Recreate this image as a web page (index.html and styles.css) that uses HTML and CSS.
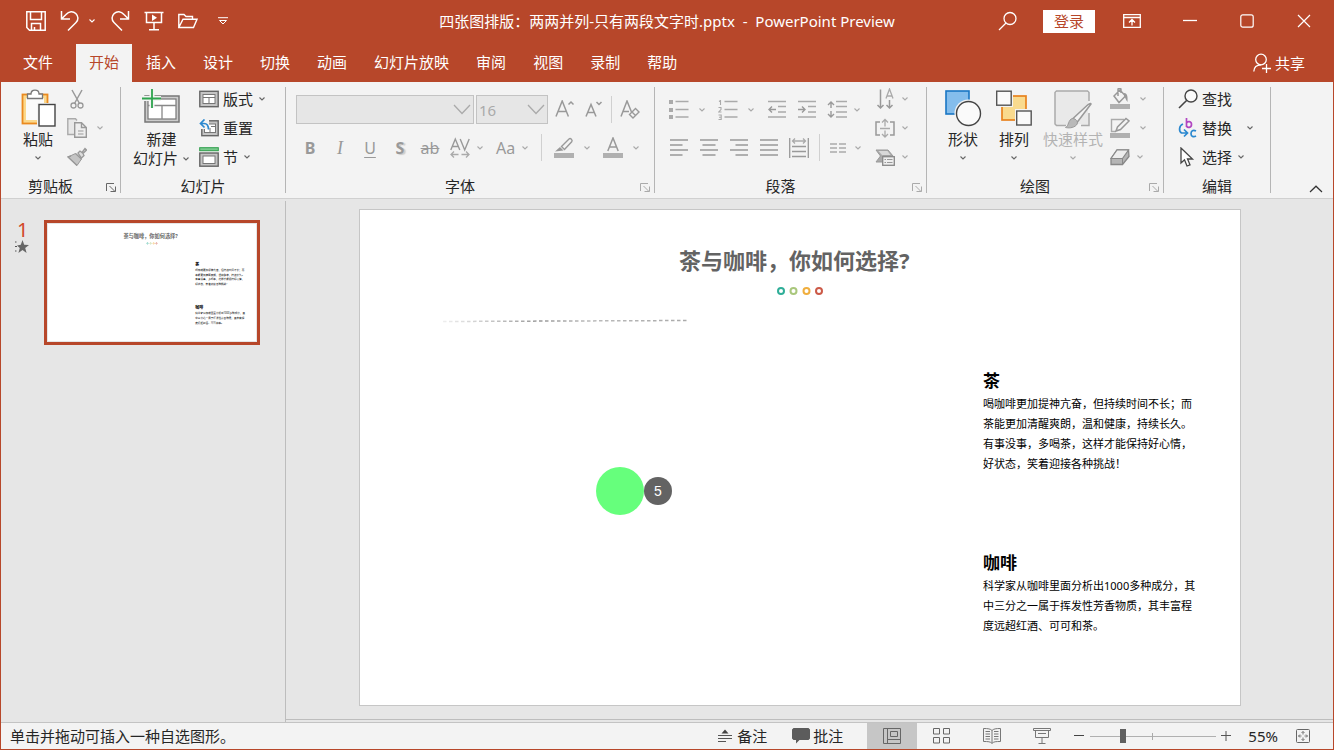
FILE: index.html
```html
<!DOCTYPE html>
<html lang="zh-CN">
<head>
<meta charset="utf-8">
<meta name="viewport" content="width=device-width, initial-scale=1">
<title>PowerPoint Preview</title>
<link rel="stylesheet" href="styles.css">
</head>
<body>
<svg class="defs" width="0" height="0" aria-hidden="true">
  <symbol id="chev" viewBox="0 0 8 6"><path d="M1.500 1.500 4 4 6.500 1.500" fill="none" stroke="currentColor" stroke-width="1.1"/></symbol>
  <symbol id="launch" viewBox="0 0 10 10"><path d="M.5 9V1.500H8M3.500 4 9 9.500M9.500 4.500V9.500H4.500" fill="none" stroke="currentColor"/></symbol>
</svg>
<div class="app">
  <header class="titlebar">
    <div class="quick">
      <button class="btn" aria-label="保存"><svg width="20" height="20" viewBox="0 0 20 20"><path d="M.8.8H19.200V19.200H3.500L.8 16.500ZM4.500 1V8.500H15.500V1M5.500 19V12.500H14.500V19M8.500 19V16" fill="none" stroke="#fff" stroke-width="1.500"/></svg></button>
      <button class="btn undo" aria-label="撤消"><svg width="20" height="22" viewBox="0 0 20 22"><path d="M1.500 1V9H10M2 8.500 6 4.500C9 1 13 .8 15.800 3.500S18.600 10 16 12.500L8 20.500" fill="none" stroke="#fff" stroke-width="1.500"/></svg><svg width="8" height="6"><use href="#chev"/></svg></button>
      <button class="btn" aria-label="恢复"><svg width="20" height="22" viewBox="0 0 20 22"><path d="M18.500 1V9H10M18 8.500 14 4.500C11 1 7 .8 4.200 3.500S1.400 10 4 12.500L12 20.500" fill="none" stroke="#fff" stroke-width="1.500"/></svg></button>
      <button class="btn" aria-label="从头放映"><svg width="20" height="20" viewBox="0 0 20 20"><path d="M.5 1.500H19.500M2.500 2V11.500H17.500V2M10 11.500V18.500M5 18.700H15" fill="none" stroke="#fff" stroke-width="1.500"/><path d="M8 3.500V10L13 6.700Z" fill="#fff"/></svg></button>
      <button class="btn" aria-label="打开"><svg width="20" height="16" viewBox="0 0 20 16"><path d="M.8 14.500V1.500H6L8 3.500H14.500V6M.8 14.500 5 6.200H19L15.500 14.500Z" fill="none" stroke="#fff" stroke-width="1.400"/></svg></button>
      <button class="btn last" aria-label="自定义快速访问工具栏"><svg width="10" height="8" viewBox="0 0 10 8"><path d="M0 .7H10M1.500 3.500H8.500L5 7Z" fill="none" stroke="#fff"/></svg></button>
    </div>
    <h1 class="doc-title">四张图排版：两两并列-只有两段文字时.pptx  -  PowerPoint Preview</h1>
    <div class="window">
      <button class="btn" aria-label="搜索"><svg width="20" height="20" viewBox="0 0 20 20"><circle cx="12" cy="7.500" r="6" fill="none" stroke="#fff" stroke-width="1.300"/><path d="M8 12 1 19" stroke="#fff" stroke-width="1.300"/></svg></button>
      <button class="login">登录</button>
      <button class="btn" aria-label="功能区显示选项"><svg width="18" height="14" viewBox="0 0 18 14"><path d="M.7.7H17.300V13.300H.7ZM.7 3.500H17.300M9 11.500V5.500M6 8.500 9 5.500 12 8.500" fill="none" stroke="#fff" stroke-width="1.300"/></svg></button>
      <span class="frame">
        <button class="btn" aria-label="最小化"><svg width="14" height="14" viewBox="0 0 14 14"><path d="M0 6.500H14" stroke="#fff" stroke-width="1.300"/></svg></button>
        <button class="btn" aria-label="最大化"><svg width="14" height="14" viewBox="0 0 14 14"><rect x=".8" y=".8" width="12.400" height="12.400" rx="2" fill="none" stroke="#fff" stroke-width="1.200"/></svg></button>
        <button class="btn" aria-label="关闭"><svg width="14" height="14" viewBox="0 0 14 14"><path d="M1 1 13 13M13 1 1 13" stroke="#fff" stroke-width="1.200"/></svg></button>
      </span>
    </div>
  </header>

  <nav class="tabs">
    <button class="tab file">文件</button>
    <button class="tab active">开始</button>
    <button class="tab">插入</button>
    <button class="tab">设计</button>
    <button class="tab">切换</button>
    <button class="tab">动画</button>
    <button class="tab">幻灯片放映</button>
    <button class="tab">审阅</button>
    <button class="tab">视图</button>
    <button class="tab">录制</button>
    <button class="tab">帮助</button>
    <button class="share"><svg width="18" height="20" viewBox="0 0 18 20"><circle cx="8" cy="6.500" r="5.300" fill="none" stroke="#fff" stroke-width="1.300"/><path d="M.8 18.500C1 14 4 11.800 8 11.800M9 15.500H18M13.500 11V20" fill="none" stroke="#fff" stroke-width="1.300"/></svg>共享</button>
  </nav>

  <section class="ribbon">
    <div class="group g-clip">
      <div class="tools">
        <button class="big"><svg width="38" height="40" viewBox="0 0 38 40"><rect x="3.500" y="5.500" width="25" height="29" fill="#fbd88b" stroke="#ea8a1f" stroke-width="1.800"/><rect x="7" y="9" width="18" height="22" fill="#fafafa"/><path d="M8.500 9.500V5H12C12 2.500 13.500 1.200 16 1.200S20 2.500 20 5H23.500V9.500Z" fill="#fff" stroke="#777" stroke-width="1.300"/><rect x="18" y="14" width="18" height="24" fill="#f3f3f3"/><rect x="20" y="15.500" width="16" height="21.500" fill="#fff" stroke="#444" stroke-width="1.400"/></svg><span>粘贴</span><svg width="8" height="6"><use href="#chev"/></svg></button>
        <div class="stack off">
          <button class="btn" disabled aria-label="剪切"><svg width="20" height="20" viewBox="0 0 20 20"><path d="M5 1 12.500 14.500M15 1 7.500 14.500" fill="none" stroke="#999" stroke-width="1.500"/><circle cx="6.500" cy="16.500" r="2.500" fill="none" stroke="#999" stroke-width="1.300"/><circle cx="13.500" cy="16.500" r="2.500" fill="none" stroke="#999" stroke-width="1.300"/></svg></button>
          <button class="btn split" disabled aria-label="复制"><svg width="20" height="20" viewBox="0 0 20 20"><path d="M7 16.500H.8V.8H8.500L10 2.500" fill="#e8e8e8" stroke="#aaa" stroke-width="1.400"/><path d="M7.700 4.700H14.500L19.300 9.500V19.300H7.700ZM14.500 4.700V9.500H19.300" fill="#eee" stroke="#999" stroke-width="1.400"/><path d="M11 13H16.500M11 16H16.500" stroke="#999"/></svg><svg width="8" height="6"><use href="#chev"/></svg></button>
          <button class="btn" disabled aria-label="格式刷"><svg width="20" height="20" viewBox="0 0 20 20"><path d="M11 6 13 4 15 5.500 18 1.500 19.500 3 16 6.500 17 8.500 14.500 11Z" fill="#ddd" stroke="#999" stroke-width="1.300"/><path d="M8.500 6.500 14.500 12 10 18.500 1 10Z" fill="#c4c4c4" stroke="#999"/><path d="M8.500 6.500 14.500 12M4 9 1 10 10 18.500" fill="none" stroke="#999" stroke-width="1.400"/></svg></button>
        </div>
      </div>
      <div class="foot"><span>剪贴板</span><button class="launcher" aria-label="剪贴板设置"><svg width="10" height="10"><use href="#launch"/></svg></button></div>
    </div>

    <div class="group g-slides">
      <div class="tools">
        <button class="big"><svg width="38" height="40" viewBox="0 0 38 40"><rect x="3" y="7" width="34" height="26" fill="#ccc" stroke="#777" stroke-width="1.500"/><rect x="6" y="10" width="28" height="20" fill="#fff" stroke="#777" stroke-width="1.200"/><path d="M6 16.500H34M20 16.500V30" stroke="#888" stroke-width="1.300"/><path d="M10 0V19M0 9.500H19" stroke="#f3f3f3" stroke-width="5"/><path d="M10 0V19M0 9.500H19" stroke="#2ea44e" stroke-width="1.800"/></svg><span>新建<br>幻灯片 <svg width="8" height="6"><use href="#chev"/></svg></span></button>
        <div class="stack">
          <button class="btn item"><svg width="20" height="18" viewBox="0 0 20 18"><rect x=".8" y="1.300" width="18.400" height="15.400" fill="#c4c4c4" stroke="#666" stroke-width="1.400"/><rect x="4" y="4.500" width="12" height="9" fill="#fff" stroke="#777"/><path d="M4 7.500H16M10 7.500V13.500" stroke="#777"/></svg>版式<svg class="c" width="8" height="6"><use href="#chev"/></svg></button>
          <button class="btn item"><svg width="20" height="18" viewBox="0 0 20 18"><rect x="2.800" y="1.800" width="16.400" height="14.900" fill="#c4c4c4" stroke="#666" stroke-width="1.400"/><rect x="5.500" y="5" width="11" height="8.500" fill="#fff" stroke="#777"/><path d="M12 7.500H16M11 9V13" stroke="#777"/><path d="M0 0H10V10H0Z" fill="#f3f3f3"/><path d="M5.500.5 1.500 4.500 5.500 8.500M1.500 4.500H5C8.500 4.500 9.500 7 9.500 10.500" fill="none" stroke="#2b88cf" stroke-width="1.700"/></svg>重置</button>
          <button class="btn item"><svg width="20" height="20" viewBox="0 0 20 20"><rect x=".7" y=".7" width="18.600" height="3" fill="#79c98c" stroke="#2f9e4b"/><rect x=".8" y="6" width="18.400" height="13.200" fill="#c4c4c4" stroke="#666" stroke-width="1.400"/><rect x="4" y="9" width="12" height="7.500" fill="#fff" stroke="#777"/></svg>节<svg class="c" width="8" height="6"><use href="#chev"/></svg></button>
        </div>
      </div>
      <div class="foot"><span>幻灯片</span></div>
    </div>

    <div class="group g-font">
      <div class="tools rows off">
        <div class="row combos">
          <span class="combo wide"><select disabled aria-label="字体"><option></option></select><svg width="18" height="11" viewBox="0 0 18 11"><path d="M1 1 9 9.500 17 1" fill="none" stroke="#aaa" stroke-width="1.300"/></svg></span>
          <span class="combo"><select disabled aria-label="字号"><option>16</option></select><svg width="18" height="11" viewBox="0 0 18 11"><path d="M1 1 9 9.500 17 1" fill="none" stroke="#aaa" stroke-width="1.300"/></svg></span>
          <span class="sizing">
            <button class="btn" disabled aria-label="增大字号"><svg width="20" height="20" viewBox="0 0 20 20"><path d="M1 16.500 7.200 1 13.400 16.500M3 11.500H11.500M13.500 4.500 16 2 18.500 4.500" fill="none" stroke="#999" stroke-width="1.500"/></svg></button>
            <button class="btn" disabled aria-label="减小字号"><svg width="20" height="20" viewBox="0 0 20 20"><path d="M3 16.500 8 4.500 13 16.500M4.500 12.500H11.500M13.500 2 16 4.500 18.500 2" fill="none" stroke="#999" stroke-width="1.500"/></svg></button>
            <i class="sep"></i>
            <button class="btn" disabled aria-label="清除格式"><svg width="20" height="20" viewBox="0 0 20 20"><path d="M1 16.500 7 1 11.500 12M3 11.500H9" fill="none" stroke="#999" stroke-width="1.500"/><path d="M9.500 14.500 15.500 8.500 19 12 13 18ZM12 12 15.500 15.500" fill="#f3f3f3" stroke="#999" stroke-width="1.400"/></svg></button>
          </span>
        </div>
        <div class="row styles">
          <button class="btn glyph" disabled><b>B</b></button>
          <button class="btn glyph serif" disabled><i>I</i></button>
          <button class="btn glyph under" disabled>U</button>
          <button class="btn glyph shadow" disabled><b>S</b></button>
          <button class="btn glyph" disabled><s>ab</s></button>
          <span class="more">
            <button class="btn dd" disabled aria-label="字符间距"><svg width="20" height="22" viewBox="0 0 20 22"><path d="M.8 13 5.300 2 9.800 13M2.500 9.500H8M10.200 2 14.700 13 19.200 2" fill="none" stroke="#999" stroke-width="1.400"/><path d="M4 14.500 1 17.500 4 20.500M1 17.500H8.500M16 14.500 19 17.500 16 20.500M19 17.500H11.500" fill="none" stroke="#aaa" stroke-width="1.300"/></svg><svg width="8" height="6"><use href="#chev"/></svg></button>
            <button class="btn dd glyph" disabled><span>Aa</span><svg width="8" height="6"><use href="#chev"/></svg></button>
            <i class="sep"></i>
            <button class="btn split" disabled aria-label="文本突出显示颜色"><svg width="20" height="22" viewBox="0 0 20 22"><path d="M7.500 9.500 15 2C16.500 .8 19 3 17.700 4.800L10.500 12.500Z" fill="none" stroke="#999" stroke-width="1.400"/><path d="M6 10 9.500 13.500 1 14.500Z" fill="#999"/><rect y="16" width="20" height="5" fill="#b0b0b0"/></svg><svg width="8" height="6"><use href="#chev"/></svg></button>
            <button class="btn split" disabled aria-label="字体颜色"><svg width="20" height="22" viewBox="0 0 20 22"><path d="M4.800 14 10 1 15.200 14M6.500 10H13.500" fill="none" stroke="#999" stroke-width="1.500"/><rect y="16" width="20" height="5" fill="#b0b0b0"/></svg><svg width="8" height="6"><use href="#chev"/></svg></button>
          </span>
        </div>
      </div>
      <div class="foot"><span>字体</span><button class="launcher dim" disabled aria-label="字体设置"><svg width="10" height="10"><use href="#launch"/></svg></button></div>
    </div>

    <div class="group g-para">
      <div class="tools">
        <div class="rows off">
          <div class="row lists">
            <button class="btn split" disabled aria-label="项目符号"><svg width="20" height="20" viewBox="0 0 20 20"><path d="M0 0H4V4H0ZM0 8H4V12H0ZM0 15H4V19H0Z" fill="#aaa"/><path d="M6.500 1.500H19.500M6.500 9.500H19.500M6.500 17H19.500" stroke="#aaa" stroke-width="1.500"/></svg><svg width="8" height="6"><use href="#chev"/></svg></button>
            <button class="btn split" disabled aria-label="编号"><svg width="20" height="20" viewBox="0 0 20 20"><path d="M1 1.500 2.500.5V5M.5 7.500H3V9.500L.8 12H3.500M.5 15H3.200V19.500H.5M1 17.200H3" fill="none" stroke="#aaa" stroke-width="1.100"/><path d="M6.500 1.500H19.500M6.500 9.500H19.500M6.500 17H19.500" stroke="#aaa" stroke-width="1.500"/></svg><svg width="8" height="6"><use href="#chev"/></svg></button>
            <span class="row">
              <button class="btn" disabled aria-label="减少列表级别"><svg width="20" height="20" viewBox="0 0 20 20"><path d="M1 1.500H19M11 6.500H19M11 12H19M1 17H19" stroke="#aaa" stroke-width="1.500"/><path d="M5 6.500 2 9.500 5 12.500M2 9.500H9" fill="none" stroke="#999" stroke-width="1.400"/></svg></button>
              <button class="btn" disabled aria-label="提高列表级别"><svg width="20" height="20" viewBox="0 0 20 20"><path d="M1 1.500H19M11 6.500H19M11 12H19M1 17H19" stroke="#aaa" stroke-width="1.500"/><path d="M5 6.500 8 9.500 5 12.500M8 9.500H1" fill="none" stroke="#999" stroke-width="1.400"/></svg></button>
              <button class="btn dd" disabled aria-label="行距"><svg width="20" height="20" viewBox="0 0 20 20"><path d="M9 1.500H20M9 6.500H20M9 12H20M9 17H20" stroke="#aaa" stroke-width="1.500"/><path d="M1 5 4 2 7 5M4 2V8M1 14 4 17 7 14M4 17V11" fill="none" stroke="#999" stroke-width="1.400"/></svg><svg width="8" height="6"><use href="#chev"/></svg></button>
            </span>
          </div>
          <div class="row">
            <button class="btn" disabled aria-label="左对齐"><svg width="20" height="20" viewBox="0 0 20 20"><path d="M1 2H19M1 7H13.500M1 12H19M1 17H13.500" stroke="#999" stroke-width="1.500"/></svg></button>
            <button class="btn" disabled aria-label="居中"><svg width="20" height="20" viewBox="0 0 20 20"><path d="M1 2H19M3.500 7H16.500M1 12H19M3.500 17H16.500" stroke="#999" stroke-width="1.500"/></svg></button>
            <button class="btn" disabled aria-label="右对齐"><svg width="20" height="20" viewBox="0 0 20 20"><path d="M1 2H19M6.500 7H19M1 12H19M6.500 17H19" stroke="#999" stroke-width="1.500"/></svg></button>
            <button class="btn" disabled aria-label="两端对齐"><svg width="20" height="20" viewBox="0 0 20 20"><path d="M1 2H19M1 7H19M1 12H19M1 17H19" stroke="#999" stroke-width="1.500"/></svg></button>
            <button class="btn" disabled aria-label="分散对齐"><svg width="20" height="22" viewBox="0 0 20 22"><path d="M.7 1V21M19.300 1V21" stroke="#999" stroke-width="1.300"/><path d="M3 9.500H17M3 14.500H17M3 19.500H17" stroke="#999" stroke-width="1.500"/><path d="M6 1.500 3.500 4 6 6.500M14 1.500 16.500 4 14 6.500M3.500 4H16.500" fill="none" stroke="#aaa" stroke-width="1.300"/></svg></button>
            <i class="sep"></i>
            <button class="btn dd" disabled aria-label="分栏"><svg width="18" height="20" viewBox="0 0 18 20"><path d="M0 6H7M0 10H7M0 14H7M9 6H16M9 10H16M9 14H16" stroke="#aaa" stroke-width="1.400"/></svg><svg width="8" height="6"><use href="#chev"/></svg></button>
          </div>
        </div>
        <div class="stack off">
          <button class="btn dd" disabled aria-label="文字方向"><svg width="20" height="22" viewBox="0 0 20 22"><path d="M5.500 1.500V20M2.500 17 5.500 20 8.500 17M14.500 12V20M11.500 17 14.500 20 17.500 17" fill="none" stroke="#999" stroke-width="1.500"/><path d="M11 10.500 14.500 1 18 10.500M12 8H17" fill="none" stroke="#aaa" stroke-width="1.300"/></svg><svg width="8" height="6"><use href="#chev"/></svg></button>
          <button class="btn dd" disabled aria-label="对齐文本"><svg width="20" height="20" viewBox="0 0 20 20"><path d="M5 4H1V17H5M15 4H19V17H15" fill="none" stroke="#999" stroke-width="1.500"/><path d="M5 10.500H15M10 1.500V8.500M7 4.500 10 1.500 13 4.500M10 12.500V19M7 16 10 19 13 16" fill="none" stroke="#aaa" stroke-width="1.300"/></svg><svg width="8" height="6"><use href="#chev"/></svg></button>
          <button class="btn dd" disabled aria-label="转换为 SmartArt"><svg width="20" height="18" viewBox="0 0 20 18"><path d="M1 2H13L18 8H8V14H1L5.500 8Z" fill="#aaa" stroke="#999"/><path d="M3.500 3H12.500L15.500 7H7Z" fill="#d8d8d8"/><rect x="7.700" y="8.700" width="11.600" height="8.600" fill="#eee" stroke="#888" stroke-width="1.300"/><path d="M9.500 11.500H11M12 11.500H17.500M9.500 14.500H11M12 14.500H17.500" stroke="#999"/></svg><svg width="8" height="6"><use href="#chev"/></svg></button>
        </div>
      </div>
      <div class="foot"><span>段落</span><button class="launcher dim" disabled aria-label="段落设置"><svg width="10" height="10"><use href="#launch"/></svg></button></div>
    </div>

    <div class="group g-draw">
      <div class="tools">
        <button class="big"><svg width="38" height="40" viewBox="0 0 38 40"><rect x="2" y="2" width="23" height="23" fill="#84bdec" stroke="#1a76c4" stroke-width="1.600"/><circle cx="24.500" cy="24.500" r="14" fill="#f3f3f3"/><circle cx="24.500" cy="24.500" r="12" fill="#fafafa" stroke="#444" stroke-width="1.400"/></svg><span>形状</span><svg width="8" height="6"><use href="#chev"/></svg></button>
        <button class="big"><svg width="38" height="40" viewBox="0 0 38 40"><rect x="7" y="7" width="24" height="24" fill="#f9da8e" stroke="#e8821e" stroke-width="1.700"/><path d="M0 0H18V18H0ZM20 20H38V38H20Z" fill="#f3f3f3"/><rect x="1.700" y="2.200" width="14.500" height="14" fill="#fafafa" stroke="#555" stroke-width="1.400"/><rect x="21.700" y="22" width="14.500" height="14" fill="#fafafa" stroke="#555" stroke-width="1.400"/></svg><span>排列</span><svg width="8" height="6"><use href="#chev"/></svg></button>
        <button class="big faded" disabled><svg width="38" height="40" viewBox="0 0 38 40"><path d="M12 36.500H2.500L1 35V3.500L2.500 2H33.500L35 3.500V12M35 24V36.500H27" fill="#e9e9e9" stroke="#aaa" stroke-width="1.500"/><path d="M2 35V3H34V35Z" fill="#e9e9e9"/><path d="M37 15 23 33.500 19 29.500 33 16.500C35 14.700 37 14 37 15Z" fill="#f3f3f3" stroke="#999" stroke-width="1.500"/><path d="M18.500 29.500C22 29.500 25 33 22.500 36 19 39.500 14 39 11.500 38.500 15 37 14 30.500 18.500 29.500Z" fill="#b9b9b9" stroke="#999"/></svg><span>快速样式</span><svg width="8" height="6"><use href="#chev"/></svg></button>
        <div class="stack off">
          <button class="btn split" disabled aria-label="形状填充"><svg width="20" height="22" viewBox="0 0 20 22"><path d="M4 8 10 2 15.500 8 9 14.500ZM8 8V1.500C8 0 11 0 11 1.500V5" fill="none" stroke="#999" stroke-width="1.500"/><path d="M14 5C17 5 18 8 17.500 14 15.500 12 15.500 9 14 8Z" fill="#999"/><rect y="16" width="20" height="5" fill="#b0b0b0"/></svg><svg width="8" height="6"><use href="#chev"/></svg></button>
          <button class="btn split" disabled aria-label="形状轮廓"><svg width="20" height="22" viewBox="0 0 20 22"><path d="M14 2.500H1.500V14.500H6" fill="none" stroke="#aaa" stroke-width="1.400"/><path d="M6 14 7.500 10 16 1.500 19 4 10.500 12.500Z" fill="none" stroke="#999" stroke-width="1.500"/><rect y="16" width="20" height="5" fill="#b0b0b0"/></svg><svg width="8" height="6"><use href="#chev"/></svg></button>
          <button class="btn dd" disabled aria-label="形状效果"><svg width="20" height="18" viewBox="0 0 20 18"><path d="M7 2H18.500L19 8.500 12.500 16.500H1V10.500Z" fill="#b5b5b5" stroke="#888" stroke-width="1.300"/><path d="M7 2H18.500L12.500 10.500H1Z" fill="#ededed" stroke="#888" stroke-width="1.200"/><path d="M12.500 10.500V16.500" stroke="#888"/></svg><svg width="8" height="6"><use href="#chev"/></svg></button>
        </div>
      </div>
      <div class="foot"><span>绘图</span><button class="launcher dim" disabled aria-label="绘图设置"><svg width="10" height="10"><use href="#launch"/></svg></button></div>
    </div>

    <div class="group g-edit">
      <div class="tools">
        <div class="stack">
          <button class="btn item"><svg width="20" height="20" viewBox="0 0 20 20"><circle cx="13" cy="7" r="6" fill="#fafafa" stroke="#444" stroke-width="1.400"/><path d="M8.800 11.200 1 19" stroke="#444" stroke-width="1.600"/></svg>查找</button>
          <button class="btn item wide"><svg width="20" height="22" viewBox="0 0 20 22"><path d="M8.500 1V10M8.500 6C9.500 4 13.500 4 13.500 7.500S9.500 11 8.500 9" fill="none" stroke="#b146c2" stroke-width="1.700"/><path d="M18 14C15 12.500 13 14 13 16.700S15.500 20.500 18 19M5 7C1 8.500.5 14 3.500 16H9M6 12.500 9.500 16 6 19.500" fill="none" stroke="#2b88cf" stroke-width="1.700"/></svg>替换<svg class="c" width="8" height="6"><use href="#chev"/></svg></button>
          <button class="btn item"><svg width="20" height="20" viewBox="0 0 20 20"><path d="M3 1V16L6.500 12.800 9 19 12 17.800 9.500 12H14.500Z" fill="#fff" stroke="#444" stroke-width="1.300"/></svg>选择<svg class="c" width="8" height="6"><use href="#chev"/></svg></button>
        </div>
      </div>
      <div class="foot"><span>编辑</span></div>
    </div>
    <button class="btn collapse" aria-label="折叠功能区"><svg width="14" height="8" viewBox="0 0 14 8"><path d="M1 7 7 1.200 13 7" fill="none" stroke="#333" stroke-width="1.200"/></svg></button>
  </section>

  <main class="work">
    <aside class="outline">
      <div class="index"><span>1</span><svg width="14" height="14" viewBox="0 0 14 14"><path d="M7.500 0 9.200 4.800 14 5 10.200 8 11.600 13 7.500 10.100 3.400 13 4.800 8 2 5.500 5.800 4.800Z" fill="#666"/><path d="M0 2H1.500M0 6.500H2M0 11H1.500" stroke="#555"/></svg></div>
      <button class="thumb" aria-label="幻灯片 1">
        <svg viewBox="0 0 880 496">
          <g class="t-title"><text x="319" y="59">茶与咖啡，你如何选择?</text></g>
          <g fill="none" stroke-width="2"><circle cx="421" cy="82" r="3" stroke="#2fae98"/><circle cx="434" cy="82" r="3" stroke="#a9c77c"/><circle cx="447" cy="82" r="3" stroke="#f0ae3e"/><circle cx="459" cy="82" r="3" stroke="#cc5a48"/></g>
          <g class="t-head"><text x="623" y="176">茶</text><text x="623" y="358">咖啡</text></g>
          <g class="t-body"><text x="623" y="199">喝咖啡更加提神亢奋，但持续时间不长；而</text><text x="623" y="219">茶能更加清醒爽朗，温和健康，持续长久。</text><text x="623" y="239">有事没事，多喝茶，这样才能保持好心情，</text><text x="623" y="259">好状态，笑着迎接各种挑战！</text><text x="623" y="381">科学家从咖啡里面分析出1000多种成分，其</text><text x="623" y="401">中三分之一属于挥发性芳香物质，其丰富程</text><text x="623" y="421">度远超红酒、可可和茶。</text></g>
        </svg>
      </button>
    </aside>
    <section class="stage">
      <article class="slide">
        <h2 class="box s-title">茶与咖啡，你如何选择?</h2>
        <svg class="box s-dots" width="48" height="10" viewBox="0 0 48 10"><g fill="none" stroke-width="2"><circle cx="5" cy="5" r="3" stroke="#2fae98"/><circle cx="17.500" cy="5" r="3" stroke="#a9c77c"/><circle cx="30.500" cy="5" r="3" stroke="#f0ae3e"/><circle cx="43" cy="5" r="3" stroke="#cc5a48"/></g></svg>
        <svg class="box s-line" width="244" height="4" viewBox="0 0 244 4"><defs><linearGradient id="fade" x1="0" x2="244" y1="0" y2="0" gradientUnits="userSpaceOnUse"><stop offset="0" stop-color="#eee"/><stop offset=".25" stop-color="#bbb"/><stop offset=".4" stop-color="#999"/><stop offset=".6" stop-color="#bbb"/><stop offset="1" stop-color="#aaa"/></linearGradient></defs><path d="M0 2.500 244 1.500" stroke="url(#fade)" stroke-width="1.500" stroke-dasharray="3.500 2.500"/></svg>
        <div class="box s-ball"></div>
        <div class="box s-badge">5</div>
        <div class="box s-tea"><h3>茶</h3><p>喝咖啡更加提神亢奋，但持续时间不长；而<br>茶能更加清醒爽朗，温和健康，持续长久。<br>有事没事，多喝茶，这样才能保持好心情，<br>好状态，笑着迎接各种挑战！</p></div>
        <div class="box s-coffee"><h3>咖啡</h3><p>科学家从咖啡里面分析出1000多种成分，其<br>中三分之一属于挥发性芳香物质，其丰富程<br>度远超红酒、可可和茶。</p></div>
      </article>
    </section>
  </main>

  <footer class="status">
    <span class="hint">单击并拖动可插入一种自选图形。</span>
    <button class="btn note"><svg width="14" height="14" viewBox="0 0 14 14"><path d="M3.500 4.500 7 .5 10.500 4.500Z" fill="#444"/><path d="M0 6.500H14M0 9.500H14M0 12.500H8" stroke="#555"/></svg>备注</button>
    <button class="btn comment"><svg width="18" height="16" viewBox="0 0 18 16"><path d="M1.500 0H16.500L18 1.500V10.500L16.500 12H7.500L4 15.500V12H1.500L0 10.500V1.500Z" fill="#5c5c5c"/></svg>批注</button>
    <div class="views">
      <button class="view on" aria-label="普通视图"><svg width="18" height="16" viewBox="0 0 18 16"><path d="M.5.5H17.500V15.500H.5ZM4.500.5V15.500M4.500 11.500H17.500M7.500 3.500H14.500V8.500H7.500Z" fill="none" stroke="#666"/></svg></button>
      <button class="view" aria-label="幻灯片浏览"><svg width="18" height="16" viewBox="0 0 18 16"><path d="M.5.5H6.500V6H.5ZM10.500.5H16.500V6H10.500ZM.5 9.500H6.500V15H.5ZM10.500 9.500H16.500V15H10.500Z" fill="none" stroke="#666"/></svg></button>
      <button class="view" aria-label="阅读视图"><svg width="18" height="16" viewBox="0 0 18 16"><path d="M9 2.500C7.500.8 5 .5.5.5V13.500C5 13.500 7.500 13.500 9 15.500 10.500 13.500 13 13.500 17.500 13.500V.5C13 .5 10.500.8 9 2.500ZM9 2.500V15M2.500 3.500H7M2.500 6H7M2.500 8.500H7M2.500 11H7M11 3.500H15.500M11 6H15.500M11 8.500H15.500M11 11H15.500" fill="none" stroke="#777"/></svg></button>
      <button class="view" aria-label="幻灯片放映"><svg width="18" height="16" viewBox="0 0 18 16"><path d="M.5.500H17.500V2.500H.5ZM2.500 2.500V9.500H15.500V2.500M5 5.500H13M9 9.500V15M5.500 15.500H12.500" fill="none" stroke="#777"/></svg></button>
    </div>
    <div class="zoom">
      <button class="btn" aria-label="缩小"><svg width="12" height="12" viewBox="0 0 12 12"><path d="M1 5.500H11" stroke="#444"/></svg></button>
      <input type="range" min="0" max="100" value="25" aria-label="缩放">
      <button class="btn" aria-label="放大"><svg width="12" height="12" viewBox="0 0 12 12"><path d="M0 5.500H10M5 1V11" stroke="#555"/></svg></button>
    </div>
    <button class="btn pct">55%</button>
    <button class="btn fit" aria-label="使幻灯片适应当前窗口"><svg width="14" height="14" viewBox="0 0 14 14"><rect x=".5" y=".5" width="13" height="13" rx="1" fill="none" stroke="#666"/><path d="M7 2.500V5.500M5.500 4 7 2.500 8.500 4M7 11.500V8.500M5.500 10 7 11.500 8.500 10M2.500 7H5.500M4 5.500 2.500 7 4 8.500M11.500 7H8.500M10 5.500 11.500 7 10 8.500" fill="none" stroke="#777"/></svg></button>
  </footer>
</div>
</body>
</html>
```
FILE: styles.css
```css
* { box-sizing: border-box; }
body {
  margin: 0;
  font: 15px/20px "Noto Sans", "Noto Sans CJK SC", sans-serif;
  color: #262626;
}
h1, h2, h3, p { margin: 0; font-size: inherit; font-weight: inherit; }
svg { display: block; flex: none; }
button, select, input { font: inherit; color: inherit; margin: 0; }
button { border: 0; padding: 0; background: none; white-space: nowrap; }
.defs { position: absolute; }
.app {
  display: flex;
  flex-direction: column;
  height: 100vh;
  border: solid #b7472a;
  border-width: 0 1px 1px;
  background: #e6e6e6;
}
.btn { display: flex; align-items: center; }

/* Title bar */
.titlebar {
  display: grid;
  grid-template-columns: 1fr auto 1fr;
  align-items: center;
  height: 44px;
  padding-bottom: 2px;
  background: #b7472a;
  color: #fff;
}
.quick { display: flex; align-items: center; gap: 14px; padding-left: 25px; }
.undo { gap: 8px; }
.quick .last { margin-left: 6px; }
.doc-title { white-space: pre; }
.window { display: flex; align-items: center; justify-content: flex-end; gap: 28px; padding-right: 22px; }
.window > .btn:first-child { margin-right: -3px; }
.login { width: 52px; height: 23px; background: #fff; color: #b7472a; line-height: 22px; }
.frame { display: flex; gap: 43px; margin-left: 14px; }

/* Tabs */
.tabs { display: flex; gap: 1px; height: 38px; background: #b7472a; color: #fff; }
.tab { padding: 0 13px 2px; }
.tab.file { padding: 0 22px 2px; }
.tab.active { background: #f3f3f3; color: #b7472a; }
.share { display: flex; align-items: center; gap: 4px; margin-left: auto; padding-right: 28px; }

/* Ribbon */
.ribbon {
  display: flex;
  height: 117px;
  padding: 5px 0;
  background: #f3f3f3;
  border-bottom: 1px solid #d0d0d0;
}
.ribbon use { color: #666; }
.ribbon .off use, .ribbon .faded use { color: #aaa; }
.group { display: flex; flex-direction: column; border-right: 1px solid #b5b5b5; }
.g-clip { width: 120px; }
.g-slides { width: 165px; }
.g-font { width: 369px; }
.g-para { width: 272px; }
.g-draw { width: 237px; }
.g-edit { width: 107px; }
.tools { display: flex; flex: none; height: 90px; }
.g-clip .tools { padding-left: 15px; gap: 7px; }
.g-slides .tools { padding-left: 12px; gap: 9px; }
.g-font .tools { padding-left: 10px; }
.g-para .tools { padding-left: 14px; gap: 13px; }
.g-draw .tools { padding-left: 14px; gap: 7px; }
.g-edit .tools { padding-left: 14px; }
.foot { display: flex; flex: none; line-height: 18px; text-align: center; }
.foot span { flex: 1; }
.launcher { display: flex; align-items: center; width: 20px; padding: 2px 4px 0 6px; }
.launcher.dim use { color: #aaa; }
.big {
  display: flex;
  flex-direction: column;
  align-items: center;
  min-width: 44px;
  padding-top: 2px;
}
.big > span { margin-top: 1px; margin-bottom: 6px; line-height: 19px; }
.big span svg { display: inline-block; vertical-align: 2px; }
.big.faded { color: #b3b3b3; }
.stack { display: flex; flex-direction: column; gap: 5px; }
.stack > .btn { height: 24px; }
.off { color: #999; }
.split { gap: 9px; }
.dd { gap: 6px; }
.item { gap: 4px; }
.item .c { margin-left: 1px; }
.item.wide .c { margin-left: 10px; }
.rows { display: flex; flex-direction: column; gap: 9px; padding-top: 8px; }
.row { display: flex; align-items: center; gap: 10px; height: 29px; }
.lists { gap: 12px; }
.row.combos { gap: 2px; }
.combo { position: relative; width: 72px; height: 29px; }
.combo.wide { width: 178px; }
.combo select {
  width: 100%;
  height: 100%;
  padding: 0 2px;
  border: 1px solid #c3c3c3;
  border-radius: 0;
  background: #e6e6e6;
  color: #aaa;
  opacity: 1;
  appearance: none;
}
.combo svg { position: absolute; right: 3px; top: 9px; }
.sizing { display: flex; align-items: center; gap: 8px; padding-left: 5px; }
.sep { width: 1px; height: 27px; background: #d0d0d0; }
.styles { padding-left: 4px; }
.more { display: flex; align-items: center; gap: 12px; }
.glyph { min-width: 20px; justify-content: center; font-size: 16px; color: #999; }
.under { text-decoration: underline; text-underline-offset: 3px; }
.serif { font-family: "Liberation Serif", serif; font-size: 18px; }
.shadow { text-shadow: 2px 1px 1px #ccc; }
.collapse { margin-left: auto; padding-right: 10px; align-self: flex-end; }

/* Work area */
.work { flex: 1; display: grid; grid-template-columns: 285px 1fr; min-height: 0; }
.outline { display: flex; align-items: flex-start; padding: 19px 25px 0 14px; margin-top: 2px; border-right: 1px solid #bdbdbd; }
.index { width: 29px; color: #d24726; font-size: 20px; line-height: 20px; }
.index span { display: block; padding-left: 2px; }
.thumb { flex: 1; border: 3px solid #b7472a; padding: 1px; background: #e6e6e6; }
.thumb svg { width: 100%; background: #fff; }
.t-title { font-size: 22px; font-weight: 700; fill: #636363; }
.t-head { font-size: 17px; font-weight: 700; fill: #000; }
.t-body { font-size: 11px; fill: #000; }
.stage { display: flex; margin-bottom: 2px; padding: 10px 92px 13px 73px; border-bottom: 1px solid #bdbdbd; }
.slide { position: relative; flex: 1; border: 1px solid #c6c6c6; background: #fff; color: #000; }
.box { position: absolute; }
.s-title { left: 319px; top: 35px; font-size: 22px; line-height: 30px; font-weight: 700; color: #636363; }
.s-dots { left: 416px; top: 76px; }
.s-line { left: 83px; top: 109px; }
.s-ball { left: 236px; top: 257px; width: 48px; height: 48px; border-radius: 50%; background: #66ff7c; }
.s-badge {
  left: 284px;
  top: 267px;
  width: 28px;
  border-radius: 50%;
  background: #636363;
  color: #fff;
  font: 14px/28px "Liberation Sans", sans-serif;
  text-align: center;
}
.s-tea { left: 623px; top: 158px; }
.s-coffee { left: 623px; top: 340px; }
.box h3 { font-size: 17px; line-height: 26px; font-weight: 700; }
.box p { font-size: 11px; line-height: 20px; white-space: nowrap; }

/* Status bar */
.status { display: flex; align-items: center; height: 27px; border-top: 1px solid #c3c3c3; background: #f3f3f3; }
.hint { flex: 1; padding-left: 9px; }
.note { gap: 5px; margin-right: 25px; }
.comment { gap: 3px; margin-right: 24px; }
.views { display: flex; align-self: stretch; }
.view { display: flex; align-items: center; justify-content: center; width: 50px; }
.view.on { background: #c6c6c6; }
.zoom { display: flex; align-items: center; gap: 5px; margin-left: 6px; }
.zoom input {
  width: 126px;
  height: 14px;
  appearance: none;
  background:
    linear-gradient(#aaa, #aaa) 62px 4px / 1px 7px no-repeat,
    linear-gradient(#b0b0b0, #b0b0b0) 0 7px / 100% 1px no-repeat;
}
.zoom input::-webkit-slider-thumb { appearance: none; width: 6px; height: 14px; background: #606060; }
.pct { margin-left: 15px; }
.fit { margin: 0 23px 0 18px; }
```
